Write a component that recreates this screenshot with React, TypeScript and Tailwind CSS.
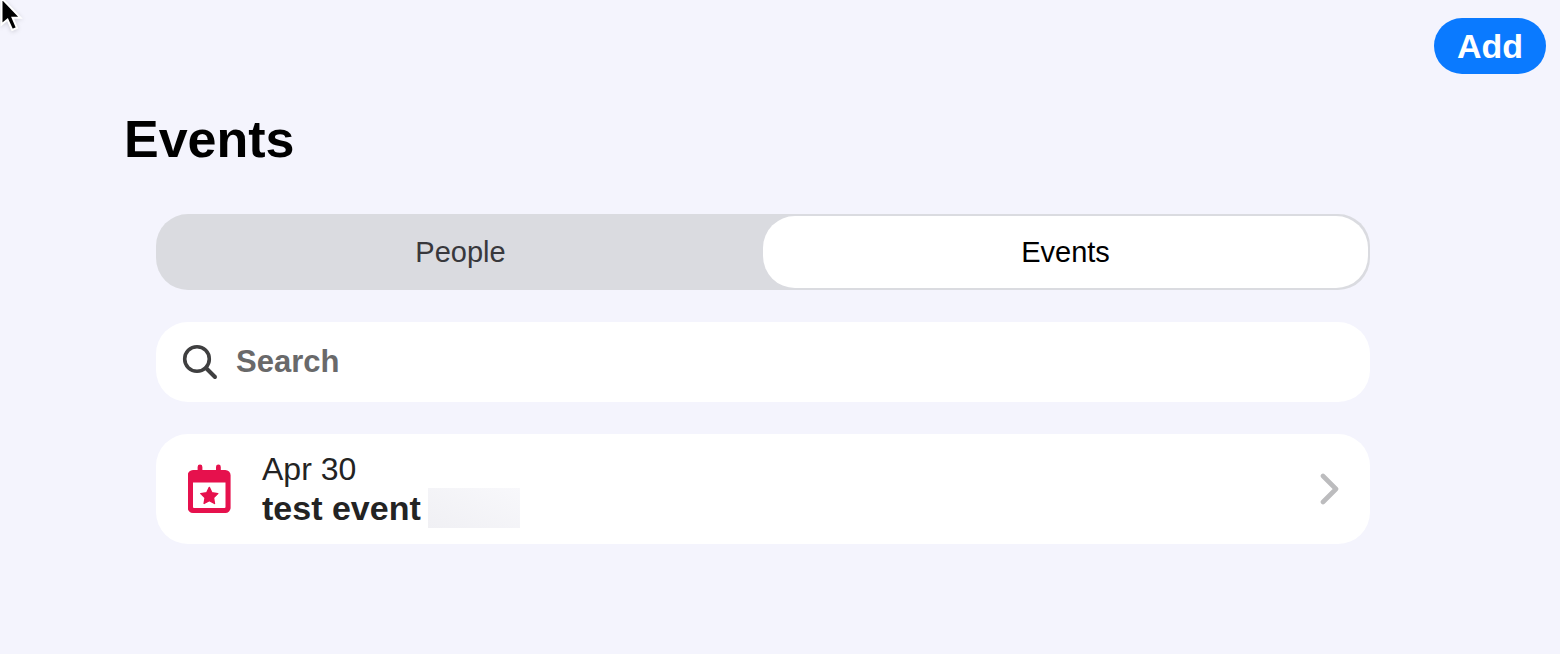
import { useState } from "react";

function SearchIcon() {
  return (
    <svg width="36" height="36" viewBox="0 0 36 36" fill="none">
      <circle cx="15" cy="15" r="12.3" stroke="#3f3f40" strokeWidth="3.6" />
      <path
        d="M24 24L33 33"
        stroke="#3f3f40"
        strokeWidth="4"
        strokeLinecap="round"
      />
    </svg>
  );
}

function CalendarIcon() {
  return (
    <svg width="44" height="50" viewBox="0 0 44 50">
      <path
        d="M12 0.5a2.4 2.4 0 0 1 2.4 2.4V6H28V2.9a2.4 2.4 0 0 1 4.8 0V6H37.3a5.3 5.3 0 0 1 5.3 5.3V43.7a5.3 5.3 0 0 1-5.3 5.3H5a5.3 5.3 0 0 1-5.3-5.3V11.3A5.3 5.3 0 0 1 5 6H9.6V2.9A2.4 2.4 0 0 1 12 0.5ZM5 18.5V43a1 1 0 0 0 1 1H36.5a1 1 0 0 0 1-1V18.500Z"
        fill="#e6114d"
        fillRule="evenodd"
      />
      <path
        d="M21.3 23.4L23.9 28.7L29.8 29.6L25.5 33.7L26.5 39.5L21.3 36.7L16.1 39.5L17.1 33.7L12.8 29.6L18.7 28.7Z"
        fill="#e6114d"
        stroke="#e6114d"
        strokeWidth="1.4"
        strokeLinejoin="round"
      />
    </svg>
  );
}

function ChevronIcon() {
  return (
    <svg width="20" height="32" viewBox="0 0 20 32" fill="none">
      <path
        d="M3 3L16 16L3 29"
        stroke="#bcbcbe"
        strokeWidth="4.6"
        strokeLinecap="round"
        strokeLinejoin="round"
      />
    </svg>
  );
}

function Cursor() {
  return (
    <svg
      className="pointer-events-none absolute top-0 left-0 drop-shadow-sm"
      width="24"
      height="34"
      viewBox="0 0 24 34"
    >
      <path
        d="M1.5 -2V24.5L7.5 19.5L12.2 30L17 28L12.6 17.8H20.5Z"
        fill="#000"
        stroke="#fff"
        strokeWidth="2"
      />
    </svg>
  );
}

type EventItem = {
  date: string;
  title: string;
};

const tabs = ["People", "Events"];

const events: EventItem[] = [{ date: "Apr 30", title: "test event" }];

export default function App() {
  const [tab, setTab] = useState("Events");

  return (
    <div className="relative min-h-screen bg-[#f4f4fd] font-['Liberation_Sans',Arial,sans-serif]">
      <header className="flex justify-end px-[14px] pt-[18px]">
        <button
          type="button"
          className="h-14 rounded-full bg-[#0a7aff] px-[23px] text-[34px] leading-10 font-bold text-white"
        >
          Add
        </button>
      </header>

      <main className="pt-8 pr-[158px] pb-16 pl-[124px]">
        <h1 className="text-[52px] leading-[66px] font-bold text-black">
          Events
        </h1>

        <div className="flex flex-col gap-8 px-8 pt-[42px]">
          <div
            role="tablist"
            className="flex h-[76px] rounded-[32px] bg-[#dadbe0] p-0.5"
          >
            {tabs.map((name) => (
              <button
                key={name}
                type="button"
                role="tab"
                aria-selected={tab === name}
                onClick={() => setTab(name)}
                className={
                  tab === name
                    ? "flex-1 rounded-[32px] bg-white text-[29px] leading-10 text-black"
                    : "flex-1 rounded-[32px] text-[29px] leading-10 text-[#38383c]"
                }
              >
                {name}
              </button>
            ))}
          </div>

          <label className="flex h-20 items-center gap-[18px] rounded-[32px] bg-white px-[26px]">
            <SearchIcon />
            <input
              type="search"
              aria-label="Search"
              placeholder="Search"
              className="h-10 min-w-0 flex-1 text-[31px] leading-10 font-bold text-[#232323] outline-none placeholder:text-[#69696a]"
            />
          </label>

          <ul className="overflow-hidden rounded-[32px] bg-white">
            {events.map((event) => (
              <li key={event.title}>
                <a href="#" className="flex items-center py-4 pr-[30px] pl-8">
                  <CalendarIcon />
                  <div className="ml-[30px] flex-1 text-[#232323]">
                    <p className="text-[32px] leading-[38px]">{event.date}</p>
                    <div className="flex items-center gap-[7px]">
                      <p className="text-[34px] leading-10 font-bold">
                        {event.title}
                      </p>
                      <span className="h-10 w-[92px] bg-linear-to-tr from-[#f0f0f4] to-[#f8f8fb]" />
                    </div>
                  </div>
                  <ChevronIcon />
                </a>
              </li>
            ))}
          </ul>
        </div>
      </main>
      <Cursor />
    </div>
  );
}
